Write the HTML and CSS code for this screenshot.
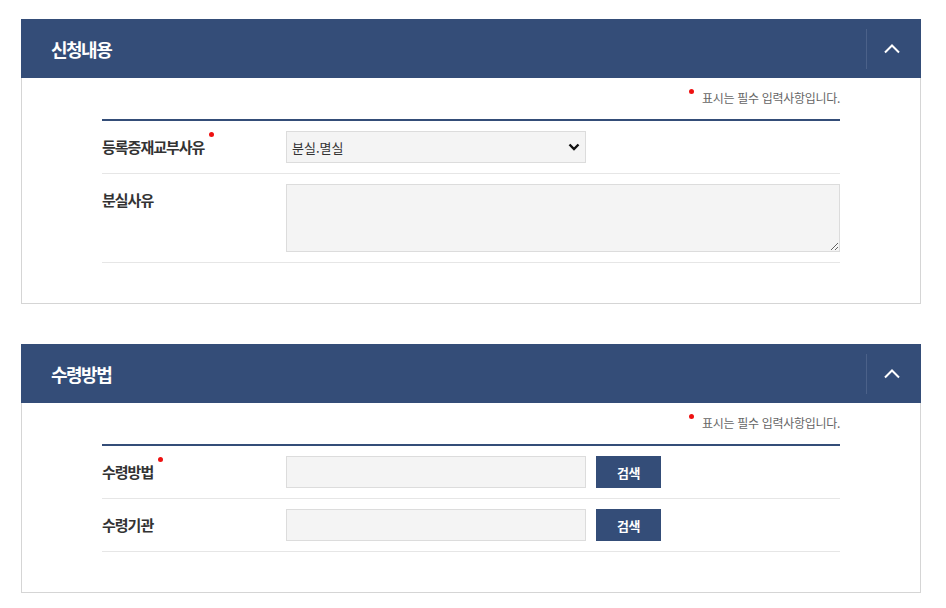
FILE: index.html
```html
<!DOCTYPE html>
<html lang="ko">
<head>
  <meta charset="UTF-8" />
  <meta name="viewport" content="width=device-width, initial-scale=1.0"/>
  <title>신청내용</title>
  <link rel="stylesheet" href="styles.css">
</head>
<body>
  <div class="wrap">

    <section class="panel">
      <div class="panel-head">
        <h2 class="panel-title">신청내용</h2>
        <button class="panel-toggle" type="button" aria-label="접기">
          <svg width="16" height="10" viewBox="0 0 16 10"><polyline points="1,8.5 8,1.5 15,8.5" fill="none" stroke="#fff" stroke-width="2"/></svg>
        </button>
      </div>
      <div class="panel-body">
        <p class="req-note"><span class="req-dot"></span>표시는 필수 입력사항입니다.</p>
        <div class="form-table">
          <div class="form-row">
            <div class="form-label">등록증재교부사유<span class="req-dot"></span></div>
            <div class="form-field">
              <div class="select-wrap">
                <select class="field-select">
                  <option>분실.멸실</option>
                  <option>훼손</option>
                </select>
                <svg class="select-arrow" width="12" height="8" viewBox="0 0 12 8"><polyline points="1.5,1.5 6,6 10.5,1.5" fill="none" stroke="#111" stroke-width="2.4"/></svg>
              </div>
            </div>
          </div>
          <div class="form-row">
            <div class="form-label">분실사유</div>
            <div class="form-field">
              <textarea class="field-area"></textarea>
            </div>
          </div>
        </div>
      </div>
    </section>

    <section class="panel">
      <div class="panel-head">
        <h2 class="panel-title">수령방법</h2>
        <button class="panel-toggle" type="button" aria-label="접기">
          <svg width="16" height="10" viewBox="0 0 16 10"><polyline points="1,8.5 8,1.5 15,8.5" fill="none" stroke="#fff" stroke-width="2"/></svg>
        </button>
      </div>
      <div class="panel-body">
        <p class="req-note"><span class="req-dot"></span>표시는 필수 입력사항입니다.</p>
        <div class="form-table">
          <div class="form-row">
            <div class="form-label">수령방법<span class="req-dot"></span></div>
            <div class="form-field">
              <input type="text" class="field-input">
              <button type="button" class="btn-search">검색</button>
            </div>
          </div>
          <div class="form-row">
            <div class="form-label">수령기관</div>
            <div class="form-field">
              <input type="text" class="field-input">
              <button type="button" class="btn-search">검색</button>
            </div>
          </div>
        </div>
      </div>
    </section>

  </div>
</body>
</html>
```

FILE: styles.css
```css
* {
  margin: 0;
  padding: 0;
  box-sizing: border-box;
  font-family: 'Noto Sans CJK KR', 'Noto Sans', sans-serif;
}

body {
  background-color: #ffffff;
  color: #333333;
}

.wrap {
  width: 900px;
  margin: 19px 0 0 21px;
}

.panel + .panel {
  margin-top: 40px;
}

/* header bar */
.panel-head {
  display: flex;
  align-items: center;
  height: 59px;
  background-color: #344d78;
  padding-left: 30px;
}

.panel-title {
  flex: 1;
  color: #ffffff;
  font-size: 18px;
  font-weight: 700;
  letter-spacing: -1.5px;
  line-height: 24px;
}

.panel-toggle {
  display: flex;
  align-items: center;
  justify-content: center;
  width: 50px;
  height: 40px;
  margin-right: 5px;
  background: none;
  border: none;
  border-left: 1px solid #4b6189;
  cursor: pointer;
}

/* body */
.panel-body {
  border: 1px solid #d5d5d5;
  border-top: none;
  padding: 11px 80px 40px;
}

.req-note {
  text-align: right;
  font-size: 12px;
  line-height: 18px;
  letter-spacing: -0.3px;
  color: #666666;
  margin-bottom: 12px;
}

.req-dot {
  display: inline-block;
  width: 5px;
  height: 5px;
  border-radius: 50%;
  background-color: #ee1111;
  vertical-align: top;
}

.req-note .req-dot {
  margin: 0 8px 0 0;
}

.form-table {
  border-top: 2px solid #344d78;
}

.form-row {
  display: flex;
  align-items: flex-start;
  padding: 10px 0;
  border-bottom: 1px solid #e6e6e6;
}

.form-label {
  width: 184px;
  flex-shrink: 0;
  font-size: 15px;
  font-weight: 700;
  line-height: 32px;
  letter-spacing: -1px;
  color: #333333;
}

.form-label .req-dot {
  margin: 1px 0 0 5px;
}

.form-field {
  flex: 1;
  display: flex;
  align-items: center;
}

.select-wrap {
  position: relative;
  width: 300px;
}

.select-arrow {
  position: absolute;
  right: 6px;
  top: 12px;
  pointer-events: none;
}

.field-select,
.field-input {
  width: 300px;
  height: 32px;
  background-color: #f4f4f4;
  border: 1px solid #dcdcdc;
  font-size: 13px;
  color: #333333;
  padding: 0 5px;
}

.field-select {
  appearance: none;
  -webkit-appearance: none;
  border-radius: 0;
}

.field-area {
  width: 100%;
  height: 68px;
  background-color: #f4f4f4;
  border: 1px solid #dcdcdc;
  font-size: 13px;
  padding: 5px;
  display: block;
}

.btn-search {
  width: 65px;
  height: 32px;
  margin-left: 10px;
  background-color: #344d78;
  color: #ffffff;
  border: none;
  font-size: 13px;
  font-weight: 700;
  letter-spacing: -0.5px;
  cursor: pointer;
}
```
